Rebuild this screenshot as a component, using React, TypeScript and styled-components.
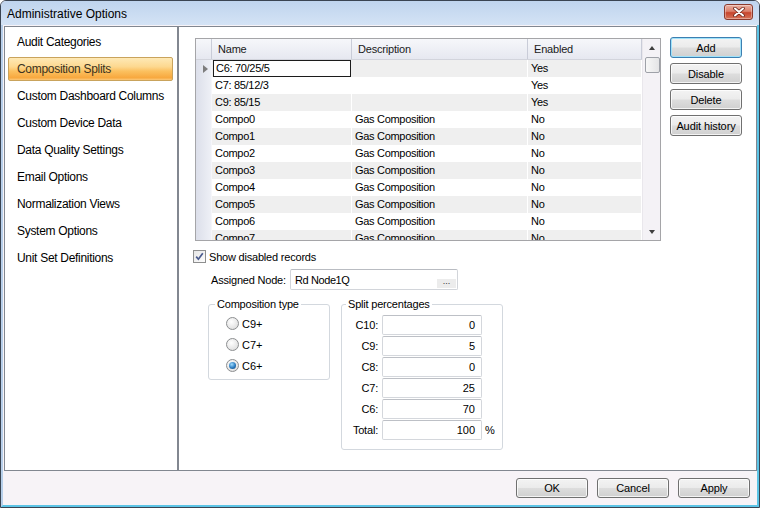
import { Fragment } from 'react';
import styled, { createGlobalStyle } from 'styled-components';

const GlobalStyle = createGlobalStyle`
  html, body {
    margin: 0;
    padding: 0;
    background: #fff;
  }
  body {
    font-family: "Liberation Sans", Arial, sans-serif;
    font-size: 11px;
    color: #000;
  }
  * {
    box-sizing: border-box;
  }
`;

const Window = styled.div`
  width: 760px;
  height: 508px;
  border: 1px solid #3a4452;
  border-radius: 6px 6px 0 0;
  display: flex;
  flex-direction: column;
  overflow: hidden;
  background: #f7f3f7;
`;

const TitleBar = styled.div`
  height: 24px;
  flex: none;
  display: flex;
  align-items: flex-start;
  justify-content: space-between;
  padding: 0 6px;
  background: linear-gradient(#bfd4ee, #d4e3f5);
`;

const Title = styled.span`
  font-size: 12px;
  line-height: 24px;
  padding-top: 1px;
  color: #000;
`;

const CloseButton = styled.div`
  margin-top: 3px;
  width: 29px;
  height: 16px;
  border: 1px solid #8b3a2d;
  border-radius: 3px;
  background: linear-gradient(#eab0a2 0%, #dc806b 45%, #c7452d 55%, #d7745a 100%);
  box-shadow: inset 0 0 0 1px rgba(255, 255, 255, 0.35);
  display: flex;
  align-items: center;
  justify-content: center;
`;

const Body = styled.div`
  flex: 1;
  display: flex;
  flex-direction: column;
  padding: 1px 0 0 1px;
  border-left: 2px solid #b7cfea;
  border-right: 2px solid #5cc4e6;
  border-bottom: 2px solid #5cc4e6;
`;

const Main = styled.div`
  height: 445px;
  flex: none;
  display: flex;
`;

const Nav = styled.div`
  width: 174px;
  flex: none;
  border: 1px solid #828790;
  background: #fff;
  padding: 3px 4px 0 3px;
  display: flex;
  flex-direction: column;
  gap: 3px;
`;

const NavItem = styled.div<{ $selected?: boolean }>`
  height: 24px;
  line-height: 22px;
  padding-left: 8px;
  font-size: 12px;
  letter-spacing: -0.3px;
  border: 1px solid ${(p) => (p.$selected ? '#c9a35c' : 'transparent')};
  border-radius: 2px;
  color: ${(p) => (p.$selected ? '#3b3220' : '#000')};
  background: ${(p) =>
    p.$selected
      ? 'linear-gradient(#fee9b6 0%, #fdd88f 40%, #fbc05f 60%, #f8a83e 90%, #fbc87a 100%)'
      : 'transparent'};
`;

const Panel = styled.div`
  flex: 1;
  border: 1px solid #828790;
  background: #fff;
  padding: 11px 0 0 16px;
  display: flex;
  flex-direction: column;
`;

const TopRow = styled.div`
  display: flex;
  align-items: flex-start;
  gap: 9px;
`;

const Grid = styled.div`
  width: 466px;
  height: 203px;
  border: 1px solid #a5a5a8;
  display: flex;
  overflow: hidden;
`;

const Table = styled.div`
  flex: 1;
  display: flex;
  flex-direction: column;
  overflow: hidden;
`;

const columns = '16px 140px 176px 1fr';

const HeaderRow = styled.div`
  display: grid;
  grid-template-columns: ${columns};
  height: 21px;
  flex: none;
  background: linear-gradient(#f6f7fa, #e6e8f0);
  border-bottom: 1px solid #d2d4dc;
`;

const HeaderCell = styled.div`
  border-right: 1px solid #c9ccd8;
  padding-left: 6px;
  line-height: 20px;
  letter-spacing: -0.2px;
  color: #1a1a1a;
`;

const Row = styled.div<{ $alt: boolean }>`
  display: grid;
  grid-template-columns: ${columns};
  height: 17px;
  flex: none;
  background: ${(p) => (p.$alt ? '#efefef' : '#fff')};
`;

const RowHead = styled.div`
  background: linear-gradient(to right, #dcdfea, #eef0f6);
  border-right: 1px solid #f6f6fa;
  display: flex;
  align-items: center;
  padding-left: 7px;
`;

const RowArrow = styled.div`
  width: 0;
  height: 0;
  border-top: 4px solid transparent;
  border-bottom: 4px solid transparent;
  border-left: 5px solid #7d7d7d;
`;

const Cell = styled.div`
  border-right: 1px solid #fff;
  padding-left: 3px;
  line-height: 16px;
  letter-spacing: -0.3px;
  white-space: nowrap;
  overflow: hidden;
`;

const EditCell = styled(Cell)`
  border: 1px solid #1c1c1c;
  margin: 0 1px;
  padding-left: 2px;
  line-height: 15px;
  background: #fff;
`;

const ScrollBar = styled.div`
  width: 18px;
  flex: none;
  background: #f4f2f6;
  border-left: 1px solid #e9e7ec;
  display: flex;
  flex-direction: column;
  align-items: center;
`;

const ArrowBox = styled.div`
  height: 17px;
  width: 100%;
  flex: none;
  display: flex;
  align-items: center;
  justify-content: center;
`;

const ArrowUp = styled.div`
  width: 0;
  height: 0;
  border-left: 3.5px solid transparent;
  border-right: 3.5px solid transparent;
  border-bottom: 4px solid #3f3f3f;
`;

const ArrowDown = styled.div`
  width: 0;
  height: 0;
  border-left: 3.5px solid transparent;
  border-right: 3.5px solid transparent;
  border-top: 4px solid #3f3f3f;
`;

const Thumb = styled.div`
  width: 15px;
  height: 16px;
  margin-top: 1px;
  margin-left: 1px;
  border: 1px solid #9ea1a8;
  border-radius: 2px;
  background: linear-gradient(to right, #f7f7f7, #e4e4e6);
`;

const Spacer = styled.div`
  flex: 1;
`;

const ButtonColumn = styled.div`
  margin-top: -1px;
  display: flex;
  flex-direction: column;
  gap: 5px;
`;

const Button = styled.div<{ $focused?: boolean; $h?: number }>`
  width: 72px;
  height: ${(p) => p.$h ?? 21}px;
  border: 1px solid ${(p) => (p.$focused ? '#3c7fb1' : '#707070')};
  border-radius: 3px;
  background: linear-gradient(#f3f3f3 0%, #ebebeb 48%, #dddddd 52%, #d0d0d0 100%);
  box-shadow: inset 0 0 0 1px ${(p) => (p.$focused ? '#9fe2fa' : 'rgba(255, 255, 255, 0.75)')};
  display: flex;
  align-items: center;
  justify-content: center;
  letter-spacing: -0.1px;
  color: #000;
`;

const CheckRow = styled.div`
  margin: 9px 0 0 -2px;
  display: flex;
  align-items: center;
  gap: 3px;
  letter-spacing: -0.2px;
`;

const CheckBox = styled.div`
  width: 13px;
  height: 13px;
  border: 1px solid #8e8f8f;
  background: linear-gradient(135deg, #e6e6e6, #fdfdfd);
  display: flex;
  align-items: center;
  justify-content: center;
`;

const NodeRow = styled.div`
  margin: 6px 0 0 16px;
  display: flex;
  align-items: center;
`;

const NodeLabel = styled.span`
  width: 79px;
  letter-spacing: -0.2px;
`;

const NodeBox = styled.div`
  width: 168px;
  height: 21px;
  border: 1px solid #d2d5da;
  border-top-color: #b9bcc2;
  border-radius: 2px;
  display: flex;
  align-items: center;
  padding: 0 1px 0 4px;
  letter-spacing: -0.4px;
`;

const NodeText = styled.span`
  flex: 1;
`;

const EllipsisButton = styled.span`
  width: 19px;
  height: 9px;
  margin-top: 8px;
  background: #ececec;
  font-size: 9px;
  line-height: 5px;
  text-align: center;
  color: #333;
  letter-spacing: 0;
`;

const GroupRow = styled.div`
  margin: 8px 0 0 13px;
  display: flex;
  align-items: flex-start;
  gap: 11px;
`;

const Group = styled.fieldset<{ $w: number; $h: number; $pad: number }>`
  width: ${(p) => p.$w}px;
  height: ${(p) => p.$h}px;
  margin: 0;
  padding: 0 0 0 ${(p) => p.$pad}px;
  border: 1px solid #d3d8de;
  border-radius: 3px;
  box-shadow: inset 0 0 0 1px #fff;
`;

const Legend = styled.legend`
  padding: 0 2px;
  line-height: 13px;
  letter-spacing: -0.2px;
`;

const RadioList = styled.div`
  padding: 6px 0 0 11px;
  display: flex;
  flex-direction: column;
  gap: 8px;
`;

const RadioRow = styled.div`
  height: 13px;
  display: flex;
  align-items: center;
  gap: 3px;
`;

const Radio = styled.div<{ $checked?: boolean }>`
  width: 13px;
  height: 13px;
  border-radius: 50%;
  border: 1px solid #8c8e90;
  background: radial-gradient(circle at 40% 35%, #ffffff, #d7d7d7);
  display: flex;
  align-items: center;
  justify-content: center;
  &::after {
    content: '';
    display: ${(p) => (p.$checked ? 'block' : 'none')};
    width: 7px;
    height: 7px;
    border-radius: 50%;
    background: radial-gradient(circle at 40% 35%, #9fdcff, #2a7bc0 55%, #123f6f);
  }
`;

const SplitGrid = styled.div`
  padding-top: 4px;
  display: grid;
  grid-template-columns: 32px 100px auto;
  column-gap: 4px;
  row-gap: 1px;
  align-items: center;
`;

const SplitLabel = styled.span`
  text-align: right;
  letter-spacing: -0.2px;
`;

const NumBox = styled.div`
  height: 20px;
  border: 1px solid #d4d7dc;
  border-top-color: #bdc0c6;
  border-radius: 2px;
  padding-right: 6px;
  text-align: right;
  line-height: 18px;
`;

const Percent = styled.span`
  margin-left: -1px;
`;

const Footer = styled.div`
  flex: 1;
  display: flex;
  justify-content: flex-end;
  align-items: flex-start;
  padding: 7px 7px 0 0;
  gap: 9px;
`;

type GridRow = { name: string; desc: string; enabled: string };

const rows: GridRow[] = [
  { name: 'C6: 70/25/5', desc: '', enabled: 'Yes' },
  { name: 'C7: 85/12/3', desc: '', enabled: 'Yes' },
  { name: 'C9: 85/15', desc: '', enabled: 'Yes' },
  ...Array.from({ length: 8 }, (_, i) => ({ name: `Compo${i}`, desc: 'Gas Composition', enabled: 'No' })),
];

const navItems = [
  'Audit Categories',
  'Composition Splits',
  'Custom Dashboard Columns',
  'Custom Device Data',
  'Data Quality Settings',
  'Email Options',
  'Normalization Views',
  'System Options',
  'Unit Set Definitions',
];

const splits = [
  { label: 'C10:', value: '0' },
  { label: 'C9:', value: '5' },
  { label: 'C8:', value: '0' },
  { label: 'C7:', value: '25' },
  { label: 'C6:', value: '70' },
  { label: 'Total:', value: '100', unit: '%' },
];

export default function App() {
  return (
    <>
      <GlobalStyle />
      <Window>
        <TitleBar>
          <Title>Administrative Options</Title>
          <CloseButton>
            <svg width="12" height="10" viewBox="0 0 12 10">
              <path d="M2 1.5 L10 8.5 M10 1.5 L2 8.5" stroke="#6a2419" strokeWidth="3.6" strokeLinecap="round" />
              <path d="M2 1.5 L10 8.5 M10 1.5 L2 8.5" stroke="#fff" strokeWidth="2" strokeLinecap="round" />
            </svg>
          </CloseButton>
        </TitleBar>
        <Body>
          <Main>
            <Nav>
              {navItems.map((item) => (
                <NavItem key={item} $selected={item === 'Composition Splits'}>
                  {item}
                </NavItem>
              ))}
            </Nav>
            <Panel>
              <TopRow>
                <Grid>
                  <Table>
                    <HeaderRow>
                      <HeaderCell />
                      <HeaderCell>Name</HeaderCell>
                      <HeaderCell>Description</HeaderCell>
                      <HeaderCell>Enabled</HeaderCell>
                    </HeaderRow>
                    {rows.map((row, i) => (
                      <Row key={row.name} $alt={i % 2 === 0}>
                        <RowHead>{i === 0 && <RowArrow />}</RowHead>
                        {i === 0 ? <EditCell>{row.name}</EditCell> : <Cell>{row.name}</Cell>}
                        <Cell>{row.desc}</Cell>
                        <Cell>{row.enabled}</Cell>
                      </Row>
                    ))}
                  </Table>
                  <ScrollBar>
                    <ArrowBox>
                      <ArrowUp />
                    </ArrowBox>
                    <Thumb />
                    <Spacer />
                    <ArrowBox>
                      <ArrowDown />
                    </ArrowBox>
                  </ScrollBar>
                </Grid>
                <ButtonColumn>
                  <Button $focused>Add</Button>
                  <Button>Disable</Button>
                  <Button>Delete</Button>
                  <Button>Audit history</Button>
                </ButtonColumn>
              </TopRow>

              <CheckRow>
                <CheckBox>
                  <svg width="9" height="9" viewBox="0 0 9 9">
                    <path d="M1.2 4.6 L3.4 7.2 L7.8 1.2" fill="none" stroke="#4a5b8e" strokeWidth="1.7" />
                  </svg>
                </CheckBox>
                <span>Show disabled records</span>
              </CheckRow>

              <NodeRow>
                <NodeLabel>Assigned Node:</NodeLabel>
                <NodeBox>
                  <NodeText>Rd Node1Q</NodeText>
                  <EllipsisButton>...</EllipsisButton>
                </NodeBox>
              </NodeRow>

              <GroupRow>
                <Group $w={122} $h={82} $pad={6}>
                  <Legend>Composition type</Legend>
                  <RadioList>
                    <RadioRow>
                      <Radio />
                      <span>C9+</span>
                    </RadioRow>
                    <RadioRow>
                      <Radio />
                      <span>C7+</span>
                    </RadioRow>
                    <RadioRow>
                      <Radio $checked />
                      <span>C6+</span>
                    </RadioRow>
                  </RadioList>
                </Group>
                <Group $w={162} $h={152} $pad={4}>
                  <Legend>Split percentages</Legend>
                  <SplitGrid>
                    {splits.map((s) => (
                      <Fragment key={s.label}>
                        <SplitLabel>{s.label}</SplitLabel>
                        <NumBox>{s.value}</NumBox>
                        <Percent>{s.unit ?? ''}</Percent>
                      </Fragment>
                    ))}
                  </SplitGrid>
                </Group>
              </GroupRow>
            </Panel>
          </Main>
          <Footer>
            <Button $h={20}>OK</Button>
            <Button $h={20}>Cancel</Button>
            <Button $h={20}>Apply</Button>
          </Footer>
        </Body>
      </Window>
    </>
  );
}
